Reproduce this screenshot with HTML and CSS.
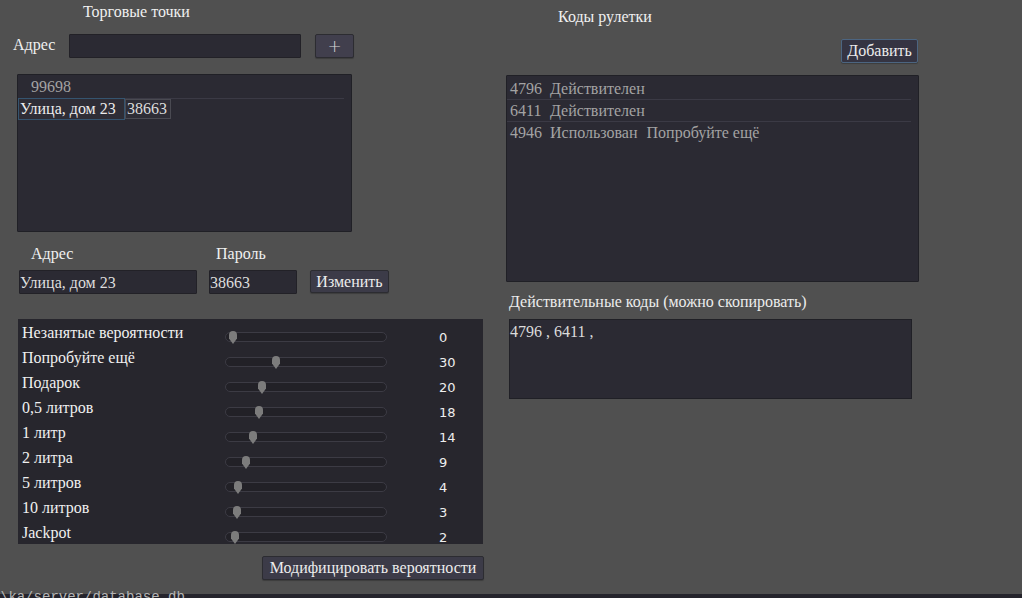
FILE: index.html
```html
<!DOCTYPE html>
<html lang="ru">
<head>
<meta charset="utf-8">
<title>Рулетка</title>
<link rel="stylesheet" href="styles.css">
</head>
<body>
<div class="app">
  <div class="left">
    <div class="title">Торговые точки</div>
    <div class="addrow">
      <span class="addlabel">Адрес</span>
      <div class="input addinput"></div>
      <button class="btn plus">+</button>
    </div>
    <div class="list shops">
      <div class="shoprow first">99698</div>
      <div class="shoprow edit">
        <span class="cell cell-focus">Улица, дом 23</span>
        <span class="cell cell-pass">38663</span>
      </div>
    </div>
    <div class="editlabels">
      <span class="el-addr">Адрес</span>
      <span class="el-pass">Пароль</span>
    </div>
    <div class="editrow">
      <div class="input in-addr">Улица, дом 23</div>
      <div class="input in-pass">38663</div>
      <button class="btn change">Изменить</button>
    </div>
    <div class="sliders">
      <div class="srow"><span class="slabel">Незанятые вероятности</span><div class="groove"><svg class="handle" style="left:0px" viewBox="0 0 8 13" width="8" height="13"><path d="M4 0C6.6 0 8 1.6 8 4L8 7.5L4 13L0 7.5L0 4C0 1.6 1.4 0 4 0Z"/></svg></div><span class="sval">0</span></div>
      <div class="srow"><span class="slabel">Попробуйте ещё</span><div class="groove"><svg class="handle" style="left:43px" viewBox="0 0 8 13" width="8" height="13"><path d="M4 0C6.6 0 8 1.6 8 4L8 7.5L4 13L0 7.5L0 4C0 1.6 1.4 0 4 0Z"/></svg></div><span class="sval">30</span></div>
      <div class="srow"><span class="slabel">Подарок</span><div class="groove"><svg class="handle" style="left:29px" viewBox="0 0 8 13" width="8" height="13"><path d="M4 0C6.6 0 8 1.6 8 4L8 7.5L4 13L0 7.5L0 4C0 1.6 1.4 0 4 0Z"/></svg></div><span class="sval">20</span></div>
      <div class="srow"><span class="slabel">0,5 литров</span><div class="groove"><svg class="handle" style="left:26px" viewBox="0 0 8 13" width="8" height="13"><path d="M4 0C6.6 0 8 1.6 8 4L8 7.5L4 13L0 7.5L0 4C0 1.6 1.4 0 4 0Z"/></svg></div><span class="sval">18</span></div>
      <div class="srow"><span class="slabel">1 литр</span><div class="groove"><svg class="handle" style="left:20px" viewBox="0 0 8 13" width="8" height="13"><path d="M4 0C6.6 0 8 1.6 8 4L8 7.5L4 13L0 7.5L0 4C0 1.6 1.4 0 4 0Z"/></svg></div><span class="sval">14</span></div>
      <div class="srow"><span class="slabel">2 литра</span><div class="groove"><svg class="handle" style="left:13px" viewBox="0 0 8 13" width="8" height="13"><path d="M4 0C6.6 0 8 1.6 8 4L8 7.5L4 13L0 7.5L0 4C0 1.6 1.4 0 4 0Z"/></svg></div><span class="sval">9</span></div>
      <div class="srow"><span class="slabel">5 литров</span><div class="groove"><svg class="handle" style="left:5px" viewBox="0 0 8 13" width="8" height="13"><path d="M4 0C6.6 0 8 1.6 8 4L8 7.5L4 13L0 7.5L0 4C0 1.6 1.4 0 4 0Z"/></svg></div><span class="sval">4</span></div>
      <div class="srow"><span class="slabel">10 литров</span><div class="groove"><svg class="handle" style="left:4px" viewBox="0 0 8 13" width="8" height="13"><path d="M4 0C6.6 0 8 1.6 8 4L8 7.5L4 13L0 7.5L0 4C0 1.6 1.4 0 4 0Z"/></svg></div><span class="sval">3</span></div>
      <div class="srow"><span class="slabel">Jackpot</span><div class="groove"><svg class="handle" style="left:2px" viewBox="0 0 8 13" width="8" height="13"><path d="M4 0C6.6 0 8 1.6 8 4L8 7.5L4 13L0 7.5L0 4C0 1.6 1.4 0 4 0Z"/></svg></div><span class="sval">2</span></div>
    </div>
    <div class="modrow">
      <button class="btn modify">Модифицировать вероятности</button>
    </div>
  </div>
  <div class="right">
    <div class="rtitle">Коды рулетки</div>
    <div class="addbtnrow">
      <button class="btn add">Добавить</button>
    </div>
    <div class="list codes">
      <div class="coderow"><span class="code">4796</span><span class="state">Действителен</span></div>
      <div class="coderow"><span class="code">6411</span><span class="state">Действителен</span></div>
      <div class="coderow last"><span class="code">4946</span><span class="state">Использован</span><span class="prize">Попробуйте ещё</span></div>
    </div>
    <div class="validlabel">Действительные коды (можно скопировать)</div>
    <div class="textarea">4796 , 6411 ,</div>
  </div>
</div>
<div class="status"><span class="statustext">\ka/server/database.db</span></div>
</body>
</html>
```

FILE: styles.css
```css
html, body {
  margin: 0;
  padding: 0;
  width: 1022px;
  height: 598px;
  overflow: hidden;
}
body {
  background: #505050;
  font-family: "Liberation Serif", "Times New Roman", serif;
  font-size: 16px;
  line-height: 18px;
  color: #f0f0f0;
}
.app {
  display: flex;
  height: 591px;
}
.left {
  width: 490px;
  display: flex;
  flex-direction: column;
}
.title {
  height: 34px;
  box-sizing: border-box;
  padding: 3px 0 0 83px;
}
.addrow {
  display: flex;
  align-items: flex-start;
  height: 24px;
}
.addlabel {
  width: 56px;
  margin-left: 13px;
  padding-top: 2px;
}
.input {
  box-sizing: border-box;
  height: 24px;
  background: #2b2a33;
  border: 1px solid #222127;
  border-radius: 1px;
  line-height: 20px;
  padding: 2px 0 0 0;
  color: #dedede;
  white-space: nowrap;
  overflow: hidden;
}
.addinput {
  width: 232px;
}
.btn {
  box-sizing: border-box;
  font-family: "Liberation Serif", "Times New Roman", serif;
  font-size: 16px;
  color: #ececec;
  background: #3c3b48;
  border: 1px solid #2c2c31;
  border-radius: 2px;
  box-shadow: 0 1px 1px rgba(0,0,0,0.25);
  padding: 0;
  margin: 0;
  line-height: 20px;
}
.plus {
  width: 39px;
  height: 24px;
  margin-left: 14px;
  color: #d8d8d8;
  font-family: "DejaVu Sans", sans-serif;
  font-size: 17px;
  font-weight: 300;
  background: #413f4d;
}
.list {
  box-sizing: border-box;
  background: #2b2a33;
  border: 1px solid #202026;
  border-radius: 1px;
}
.shops {
  margin: 16px 0 0 17px;
  width: 335px;
  height: 158px;
}
.shoprow.first {
  height: 24px;
  box-sizing: border-box;
  padding: 3px 0 0 11px;
  margin: 0 7px 0 2px;
  border-bottom: 1px solid #3b3a45;
  color: #a3a3a3;
}
.shoprow.edit {
  display: flex;
  align-items: center;
  height: 22px;
  margin-top: -1px;
}
.cell {
  box-sizing: border-box;
  background: #2e2d36;
  white-space: nowrap;
  color: #ececec;
}
.cell-focus {
  width: 107px;
  height: 22px;
  border: 1px solid #35546f;
  padding: 1px 0 0 1px;
  line-height: 18px;
}
.cell-pass {
  width: 46px;
  height: 20px;
  border: 1px solid #4a4a52;
  padding: 0 0 0 1px;
  line-height: 18px;
  color: #dcdcdc;
}
.editlabels {
  display: flex;
  height: 38px;
  box-sizing: border-box;
  padding-top: 13px;
}
.el-addr {
  margin-left: 31px;
  width: 185px;
}
.input.in-addr {
  width: 178px;
  margin-left: 19px;
}
.input.in-pass {
  width: 88px;
  margin-left: 12px;
}
.editrow {
  display: flex;
  align-items: flex-start;
  height: 24px;
}
.change {
  width: 79px;
  height: 23px;
  margin-left: 13px;
}
.sliders {
  margin: 25px 0 0 18px;
  width: 465px;
  height: 225px;
  background: #27262d;
  display: flex;
  flex-direction: column;
}
.srow {
  height: 25px;
  display: flex;
  align-items: flex-start;
}
.slabel {
  width: 203px;
  padding: 5px 0 0 4px;
  white-space: nowrap;
}
.groove {
  position: relative;
  box-sizing: border-box;
  margin-top: 13px;
  width: 162px;
  height: 10px;
  border: 1px solid #3c3b44;
  border-radius: 5px;
  background: #222127;
}
.handle {
  position: absolute;
  top: -2px;
  margin-left: 3px;
  fill: #7c7c7c;
}
.sval {
  margin-left: 52px;
  padding-top: 11px;
  font-family: "DejaVu Sans", sans-serif;
  font-size: 13px;
  line-height: 16px;
  color: #eeeeee;
}
.modrow {
  display: flex;
  justify-content: flex-end;
  width: 484px;
  margin-top: 12px;
}
.modify {
  width: 222px;
  height: 24px;
}
.right {
  flex: 1;
  padding-left: 16px;
  display: flex;
  flex-direction: column;
}
.rtitle {
  height: 26px;
  box-sizing: border-box;
  padding: 8px 0 0 52px;
}
.addbtnrow {
  width: 412px;
  display: flex;
  justify-content: flex-end;
  margin-top: 13px;
}
.add {
  width: 77px;
  height: 24px;
  border-color: #4c6581;
  background: #353442;
}
.codes {
  margin-top: 12px;
  width: 413px;
  height: 207px;
  padding-top: 2px;
}
.coderow {
  padding: 2px 0 1px 3px;
  margin-right: 7px;
  border-bottom: 1px solid #3b3a45;
  color: #a3a3a3;
  white-space: nowrap;
}
.coderow.last {
  border-bottom: none;
}
.code {
  display: inline-block;
  width: 40px;
}
.state {
  margin-right: 9px;
}
.validlabel {
  padding: 11px 0 0 3px;
  height: 37px;
  box-sizing: border-box;
  color: #ececec;
}
.textarea {
  box-sizing: border-box;
  margin-left: 3px;
  width: 403px;
  height: 80px;
  background: #2b2a33;
  border: 1px solid #202026;
  padding-top: 3px;
  color: #dcdcdc;
}
.status {
  height: 7px;
  overflow: hidden;
  background: linear-gradient(#505050 0, #505050 3px, #25242c 3px);
}
.statustext {
  display: block;
  margin-top: -1px;
  font-family: "Liberation Mono", monospace;
  font-size: 14px;
  line-height: 14px;
  color: #b5b5b5;
  white-space: nowrap;
}
```
